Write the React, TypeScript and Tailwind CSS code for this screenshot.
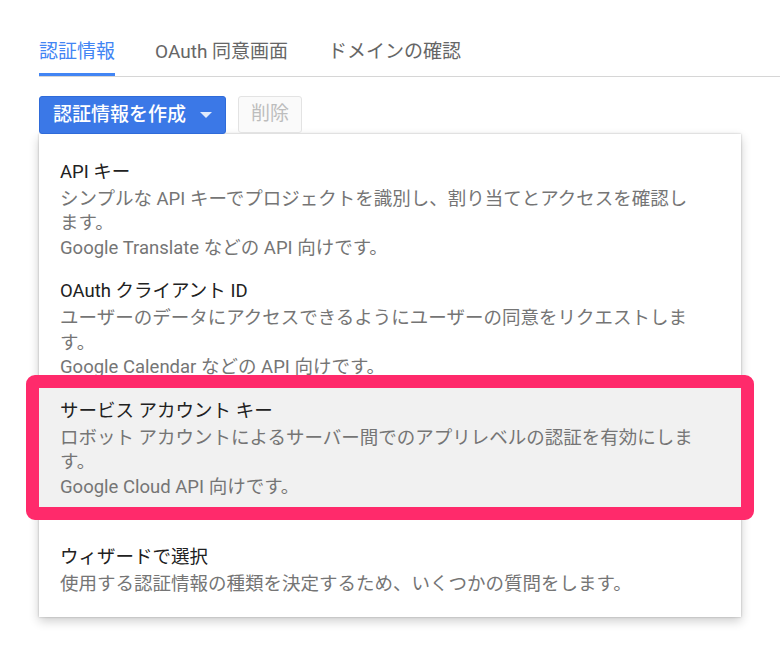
import React from 'react'

type Item = {
  title: string
  lines: string[]
  highlight?: boolean
}

const items: Item[] = [
  {
    title: 'API キー',
    lines: [
      'シンプルな API キーでプロジェクトを識別し、割り当てとアクセスを確認し',
      'ます。',
      'Google Translate などの API 向けです。',
    ],
  },
  {
    title: 'OAuth クライアント ID',
    lines: [
      'ユーザーのデータにアクセスできるようにユーザーの同意をリクエストしま',
      'す。',
      'Google Calendar などの API 向けです。',
    ],
  },
  {
    title: 'サービス アカウント キー',
    lines: [
      'ロボット アカウントによるサーバー間でのアプリレベルの認証を有効にしま',
      'す。',
      'Google Cloud API 向けです。',
    ],
    highlight: true,
  },
]

const wizard: Item = {
  title: 'ウィザードで選択',
  lines: ['使用する認証情報の種類を決定するため、いくつかの質問をします。'],
}

function MenuItem({ item, className = '' }: { item: Item; className?: string }) {
  return (
    <div className={`relative px-[21px] py-[8px] ${item.highlight ? 'bg-[#f1f1f1]' : ''} ${className}`}>
      <div className="leading-[30px] text-[#212121] whitespace-nowrap">{item.title}</div>
      {item.lines.map((l, i) => (
        <div key={i} className="leading-[24.5px] text-[#757575] whitespace-nowrap">
          {l}
        </div>
      ))}
      {/* annotation frame */}
      {item.highlight && (
        <div className="pointer-events-none absolute -inset-[13px] rounded-[9px] border-[13px] border-[#ff2a6b]" />
      )}
    </div>
  )
}

export default function App() {
  const tabs = ['認証情報', 'OAuth 同意画面', 'ドメインの確認']

  return (
    <div
      className="w-[780px] h-[657px] bg-white overflow-hidden text-[18.5px]"
      style={{ fontFamily: 'Roboto, "Noto Sans CJK JP", sans-serif' }}
    >
      <div className="pt-[36px] pl-[39px]">
        {/* Tabs */}
        <div className="flex gap-10 border-b border-[#d6d6d6] text-[19px]">
          {tabs.map((t, i) => (
            <div
              key={t}
              className={`h-[40px] leading-[32px] ${
                i === 0 ? 'text-[#4285f4] border-b-[3px] border-[#4285f4]' : 'text-[#666666]'
              }`}
            >
              {t}
            </div>
          ))}
        </div>

        {/* Actions */}
        <div className="flex gap-3 mt-[19px]">
          <button className="h-[38px] w-[187px] flex items-center pl-[13px] pr-[13px] rounded-[3px] bg-[#3b78e7] border border-[#2f6bd9] text-white text-[19px] font-medium">
            <span>認証情報を作成</span>
            <svg width="12" height="6" viewBox="0 0 12 6" className="ml-auto">
              <polygon points="0,0 12,0 6,6" fill="rgba(255,255,255,0.85)" />
            </svg>
          </button>
          <button className="h-[37px] w-[64px] rounded-[3px] border border-[#e3e3e3] bg-[#fafafa] text-[#bdbdbd] text-[19px]">
            削除
          </button>
        </div>

        {/* Dropdown menu */}
        <div className="w-[702px] h-[483px] bg-white pt-[14.5px] shadow-[0_0_2px_rgba(0,0,0,0.25),0_4px_10px_rgba(0,0,0,0.2)]">
          {items.map(it => (
            <MenuItem key={it.title} item={it} />
          ))}
          <MenuItem item={wizard} className="mt-[27px]" />
        </div>
      </div>
    </div>
  )
}
